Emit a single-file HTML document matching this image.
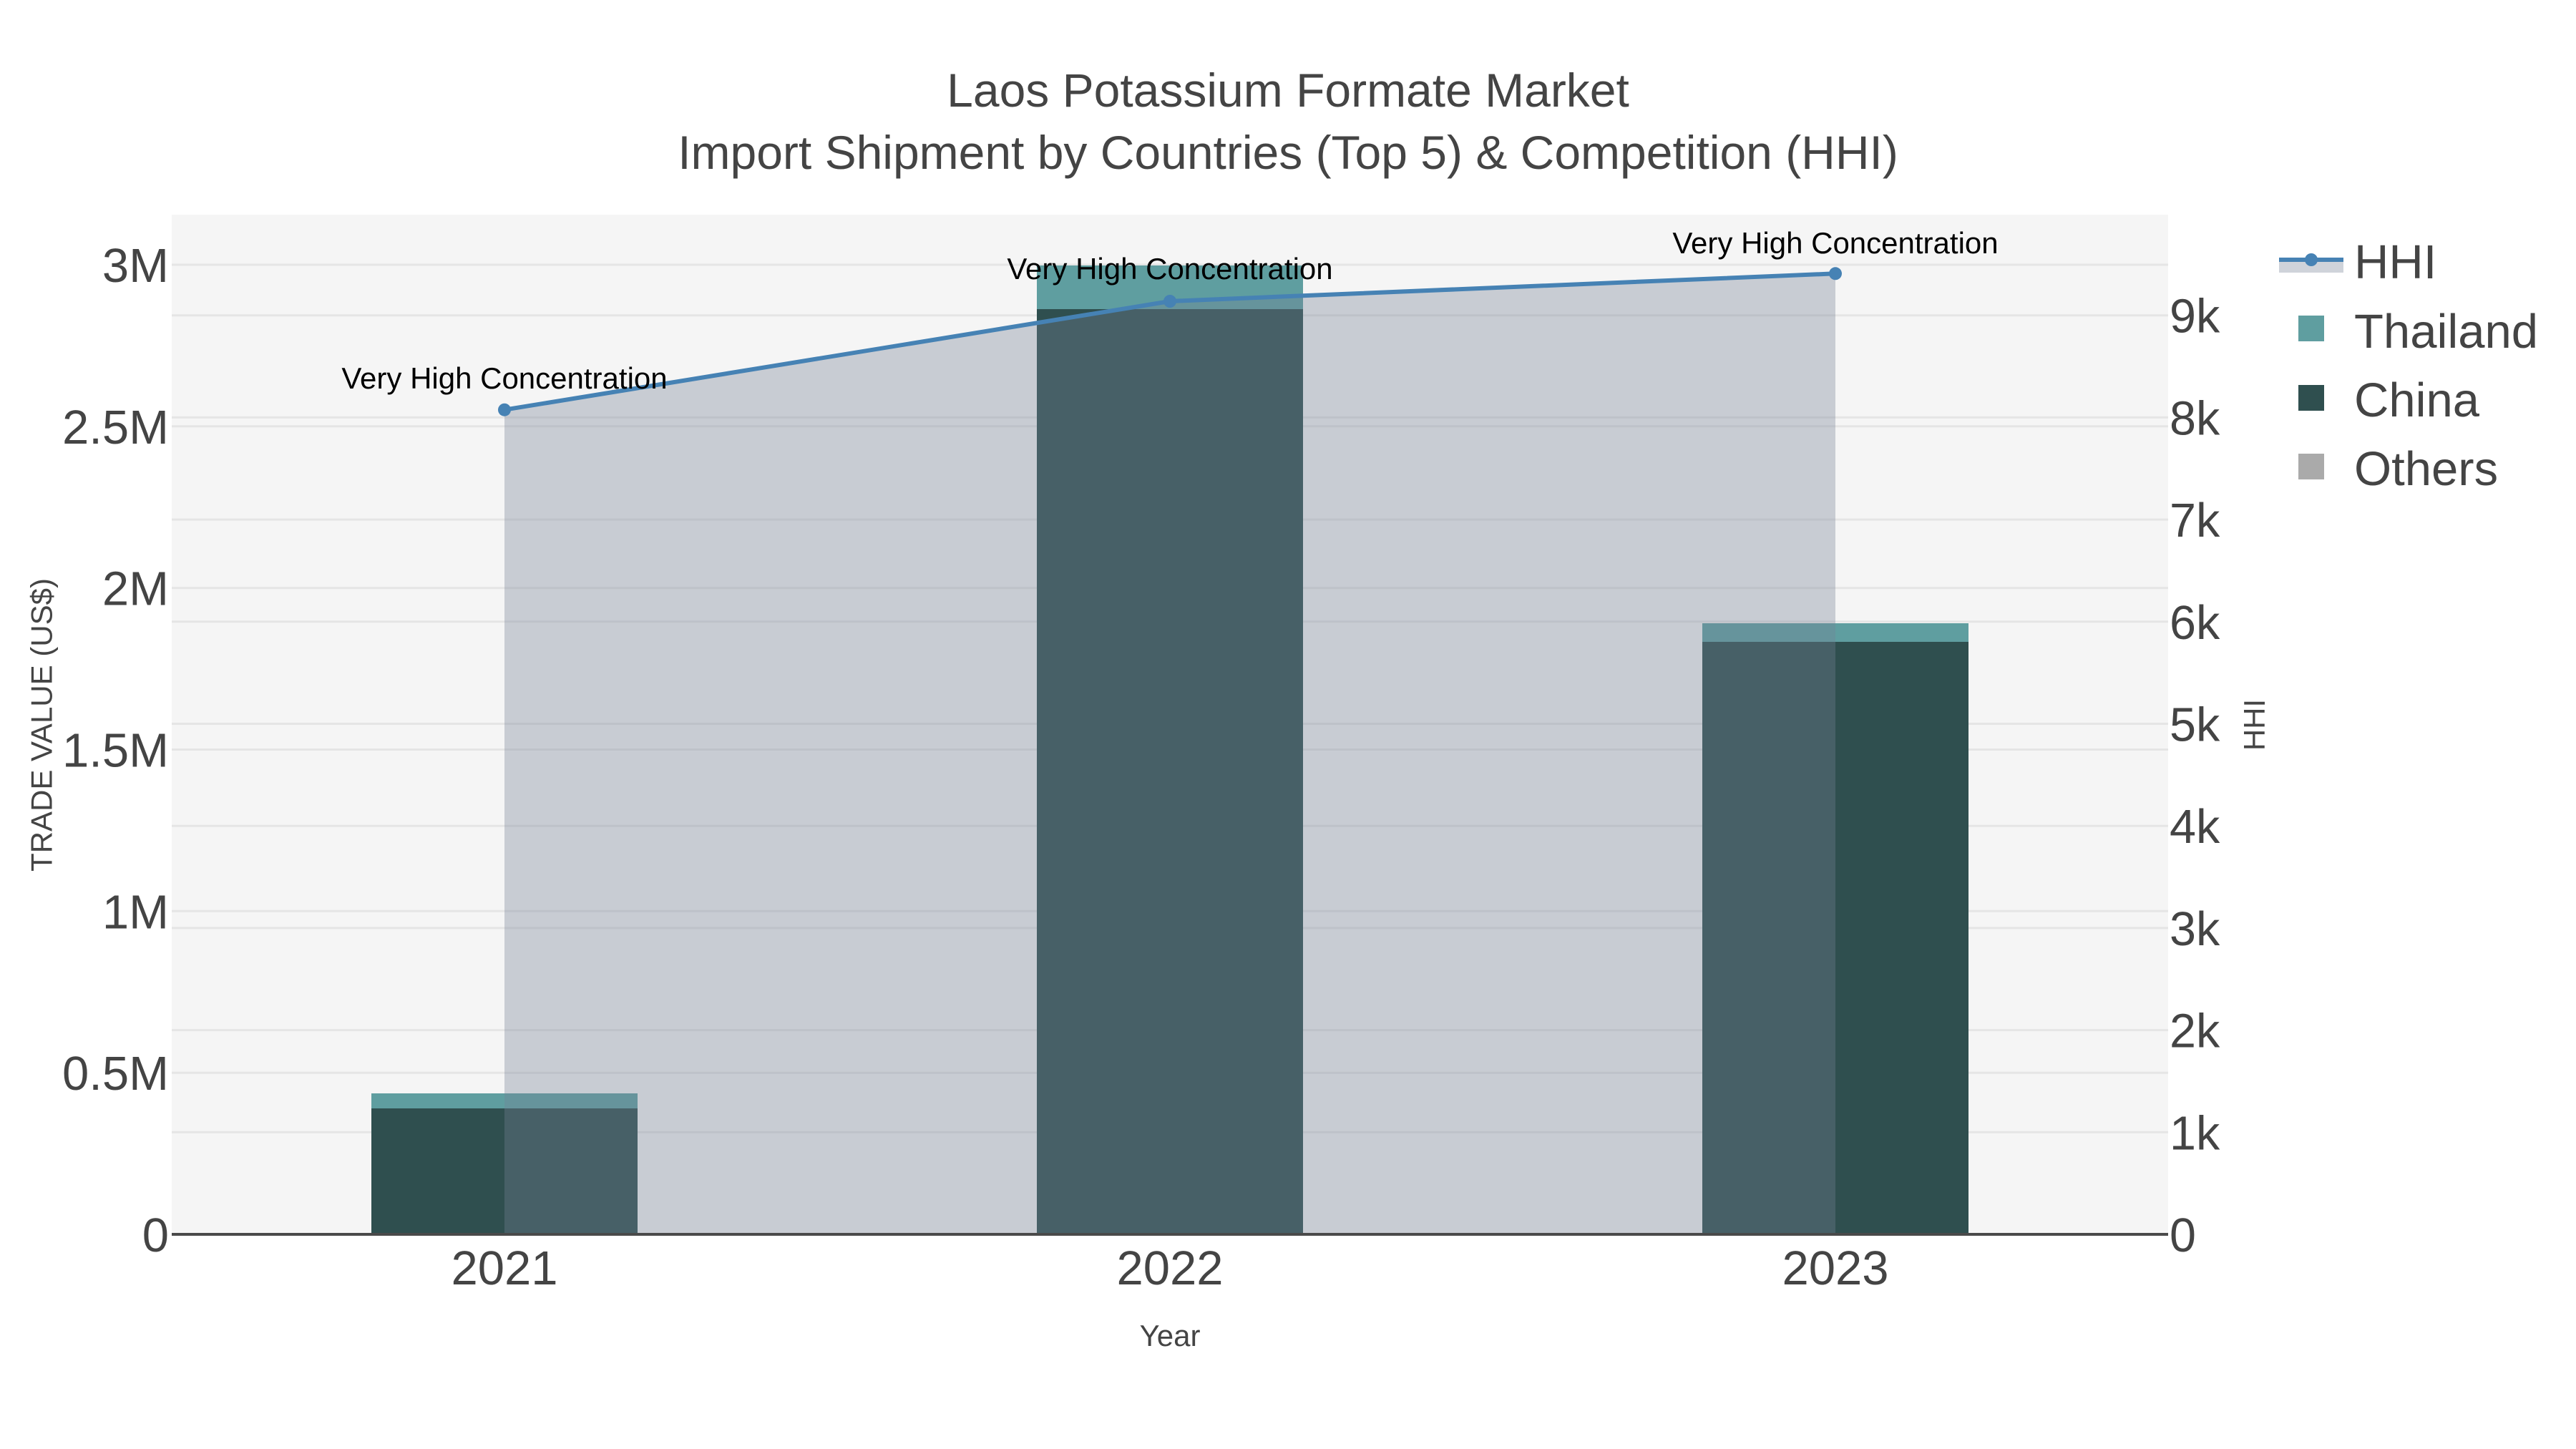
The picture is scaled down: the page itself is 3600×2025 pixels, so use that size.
<!DOCTYPE html>
<html lang="en">
<head>
<meta charset="utf-8">
<title>Laos Potassium Formate Market</title>
<style>
html,body{margin:0;padding:0;background:#fff;width:3600px;height:2025px;overflow:hidden}
svg{display:block}
text{font-family:"Liberation Sans",Arial,sans-serif;fill:#444}
.h{font-size:66px}
.t{font-size:67px}
.r{font-size:66.5px}
.a{font-size:42px}
.n{font-size:42px;fill:#000;text-anchor:middle}
.l{text-anchor:end}
.m{text-anchor:middle}
</style>
</head>
<body>
<svg width="3600" height="2025" viewBox="0 0 3600 2025" xmlns="http://www.w3.org/2000/svg">
<rect width="3600" height="2025" fill="#fff"/>
<rect x="240" y="300" width="2790" height="1425" fill="#f5f5f5"/>
<g stroke="#e5e5e5" stroke-width="3" fill="none">
<path d="M240 370H3030M240 595.8H3030M240 821.7H3030M240 1047.5H3030M240 1273.3H3030M240 1499.2H3030"/>
<path d="M240 440.7H3030M240 583.4H3030M240 726.1H3030M240 868.8H3030M240 1011.5H3030M240 1154.2H3030M240 1296.9H3030M240 1439.6H3030M240 1582.3H3030"/>
</g>
<rect x="519" y="1549" width="372" height="176" fill="#2f4f4f"/>
<rect x="519" y="1528" width="372" height="21" fill="#5f9ea0"/>
<rect x="1449" y="432" width="372" height="1293" fill="#2f4f4f"/>
<rect x="1449" y="371" width="372" height="61" fill="#5f9ea0"/>
<rect x="2379" y="897" width="372" height="828" fill="#2f4f4f"/>
<rect x="2379" y="871" width="372" height="26" fill="#5f9ea0"/>
<path d="M705 572.7L1635 421L2565 382.3V1725H705Z" fill="#758296" fill-opacity="0.35"/>
<path d="M240 1725H3030" stroke="#4a4a4a" stroke-width="4" fill="none"/>
<path d="M705 572.7L1635 421L2565 382.3" stroke="#4682b4" stroke-width="6" fill="none" stroke-linejoin="round"/>
<circle cx="705" cy="572.7" r="9" fill="#4682b4"/>
<circle cx="1635" cy="421" r="9" fill="#4682b4"/>
<circle cx="2565" cy="382.3" r="9" fill="#4682b4"/>
<text class="n" x="705" y="543">Very High Concentration</text>
<text class="n" x="1635" y="390">Very High Concentration</text>
<text class="n" x="2565" y="354">Very High Concentration</text>
<text class="h m" x="1800" y="149">Laos Potassium Formate Market</text>
<text class="h m" x="1800" y="236">Import Shipment by Countries (Top 5) &amp; Competition (HHI)</text>
<g>
<text class="t l" x="236" y="394">3M</text>
<text class="t l" x="236" y="619.8">2.5M</text>
<text class="t l" x="236" y="845.7">2M</text>
<text class="t l" x="236" y="1071.5">1.5M</text>
<text class="t l" x="236" y="1297.3">1M</text>
<text class="t l" x="236" y="1523.2">0.5M</text>
<text class="t l" x="236" y="1749">0</text>
</g>
<g>
<text class="r" x="3032" y="464.7">9k</text>
<text class="r" x="3032" y="607.4">8k</text>
<text class="r" x="3032" y="750.1">7k</text>
<text class="r" x="3032" y="892.8">6k</text>
<text class="r" x="3032" y="1035.5">5k</text>
<text class="r" x="3032" y="1178.2">4k</text>
<text class="r" x="3032" y="1320.9">3k</text>
<text class="r" x="3032" y="1463.6">2k</text>
<text class="r" x="3032" y="1606.3">1k</text>
<text class="r" x="3032" y="1749">0</text>
</g>
<text class="t m" x="705" y="1795">2021</text>
<text class="t m" x="1635" y="1795">2022</text>
<text class="t m" x="2565" y="1795">2023</text>
<text class="a m" x="1635" y="1881">Year</text>
<text class="a m" transform="translate(72.5 1013) rotate(-90)">TRADE VALUE (US$)</text>
<text class="a m" transform="translate(3165 1013) rotate(-90)">HHI</text>
<rect x="3185" y="360" width="90" height="21" fill="#758296" fill-opacity="0.35"/>
<path d="M3185 363H3275" stroke="#4682b4" stroke-width="6" fill="none"/>
<circle cx="3230" cy="363" r="9" fill="#4682b4"/>
<rect x="3212" y="441" width="36" height="36" fill="#5f9ea0"/>
<rect x="3212" y="538" width="36" height="36" fill="#2f4f4f"/>
<rect x="3212" y="634" width="36" height="36" fill="#aaaaaa"/>
<text class="t" x="3290" y="389">HHI</text>
<text class="t" x="3290" y="486">Thailand</text>
<text class="t" x="3290" y="582">China</text>
<text class="t" x="3290" y="678">Others</text>
</svg>
</body>
</html>
